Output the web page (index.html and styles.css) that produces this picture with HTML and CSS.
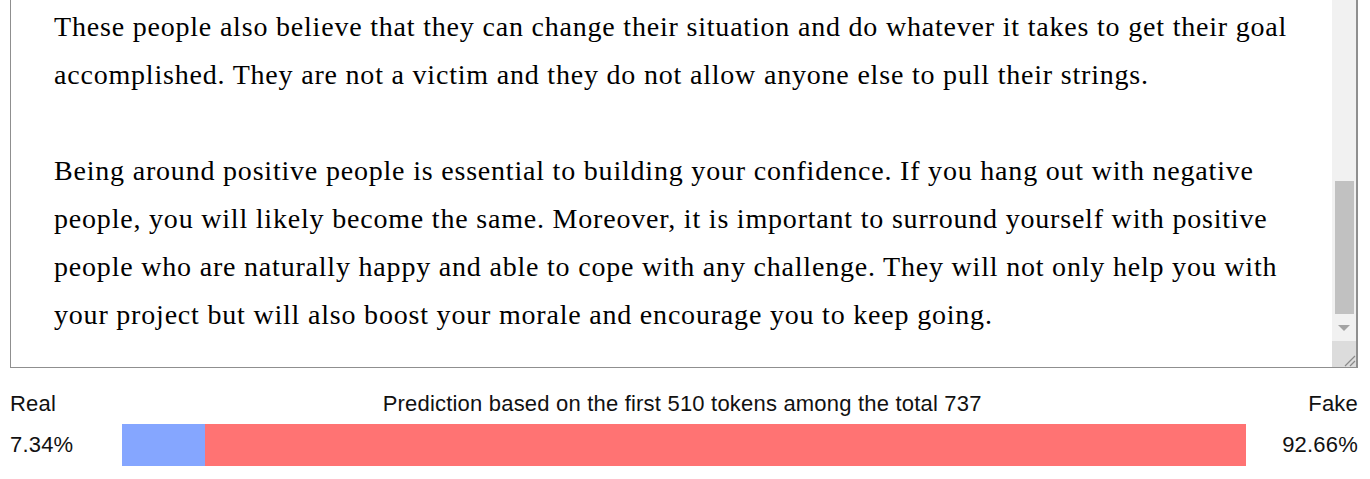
FILE: index.html
```html
<!DOCTYPE html>
<html lang="en">
<head>
    <meta charset="UTF-8">
    <meta name="viewport" content="width=device-width, initial-scale=1.0">
    <title>Detector</title>
    <link rel="stylesheet" href="styles.css">
</head>
<body>
    <div class="editor">
        <div class="editor-text">
            <p>These people also believe that they can change their situation and do whatever it takes to get their goal accomplished. They are not a victim and they do not allow anyone else to pull their strings.</p>
            <p>Being around positive people is essential to building your confidence. If you hang out with negative people, you will likely become the same. Moreover, it is important to surround yourself with positive people who are naturally happy and able to cope with any challenge. They will not only help you with your project but will also boost your morale and encourage you to keep going.</p>
        </div>
        <div class="scrollbar">
            <div class="scroll-track">
                <div class="scroll-thumb"></div>
            </div>
            <div class="scroll-arrow"></div>
            <div class="resizer">
                <svg width="14" height="14" viewBox="0 0 14 14">
                    <path d="M3 13 L13 3 M8 13 L13 8" stroke="#8a8a8a" stroke-width="1.2" fill="none"/>
                </svg>
            </div>
        </div>
    </div>

    <div class="result">
        <div class="labels">
            <span>Real</span>
            <span>Prediction based on the first 510 tokens among the total 737</span>
            <span>Fake</span>
        </div>
        <div class="bar-row">
            <span class="percent">7.34%</span>
            <div class="bar">
                <div class="bar-real" style="width: 7.34%"></div>
                <div class="bar-fake" style="width: 92.66%"></div>
            </div>
            <span class="percent right">92.66%</span>
        </div>
    </div>
</body>
</html>
```

FILE: styles.css
```css
body {
    margin: 0;
    padding: 0 12px 0 10px;
    font-family: 'Liberation Sans', Arial, sans-serif;
    color: #111;
    background: #fff;
}
.editor {
    display: flex;
    height: 367px;
    border: 1px solid #8f8f8f;
    border-top: none;
    border-right-width: 2px;
}
.editor-text {
    flex: 1;
    padding: 3px 40px 0 43px;
    font-family: 'Liberation Serif', 'Times New Roman', serif;
    font-size: 28px;
    letter-spacing: 0.8px;
    line-height: 48px;
    color: #000;
    overflow: hidden;
}
.editor-text p {
    margin: 0 0 48px;
}
.scrollbar {
    width: 24px;
    display: flex;
    flex-direction: column;
    background: #f1f1f1;
}
.scroll-track {
    flex: 1;
    padding: 181px 2px 0 3px;
}
.scroll-thumb {
    height: 133px;
    background: #c1c1c1;
}
.scroll-arrow {
    height: 26px;
    display: flex;
    align-items: center;
    justify-content: center;
}
.scroll-arrow::before {
    content: '';
    border-left: 6px solid transparent;
    border-right: 6px solid transparent;
    border-top: 6px solid #a3a3a3;
}
.resizer {
    height: 26px;
    background: #dcdcdc;
    display: flex;
    align-items: flex-end;
    justify-content: flex-end;
}
.result {
    margin-top: 23px;
    font-size: 22px;
    letter-spacing: 0.2px;
}
.labels {
    display: flex;
    justify-content: space-between;
    line-height: 25px;
}
.bar-row {
    display: flex;
    align-items: center;
    margin-top: 8px;
}
.percent {
    width: 112px;
}
.percent.right {
    text-align: right;
}
.bar {
    flex: 1;
    height: 42px;
    display: flex;
}
.bar-real {
    background: #85a6ff;
}
.bar-fake {
    background: #ff7373;
}
```
